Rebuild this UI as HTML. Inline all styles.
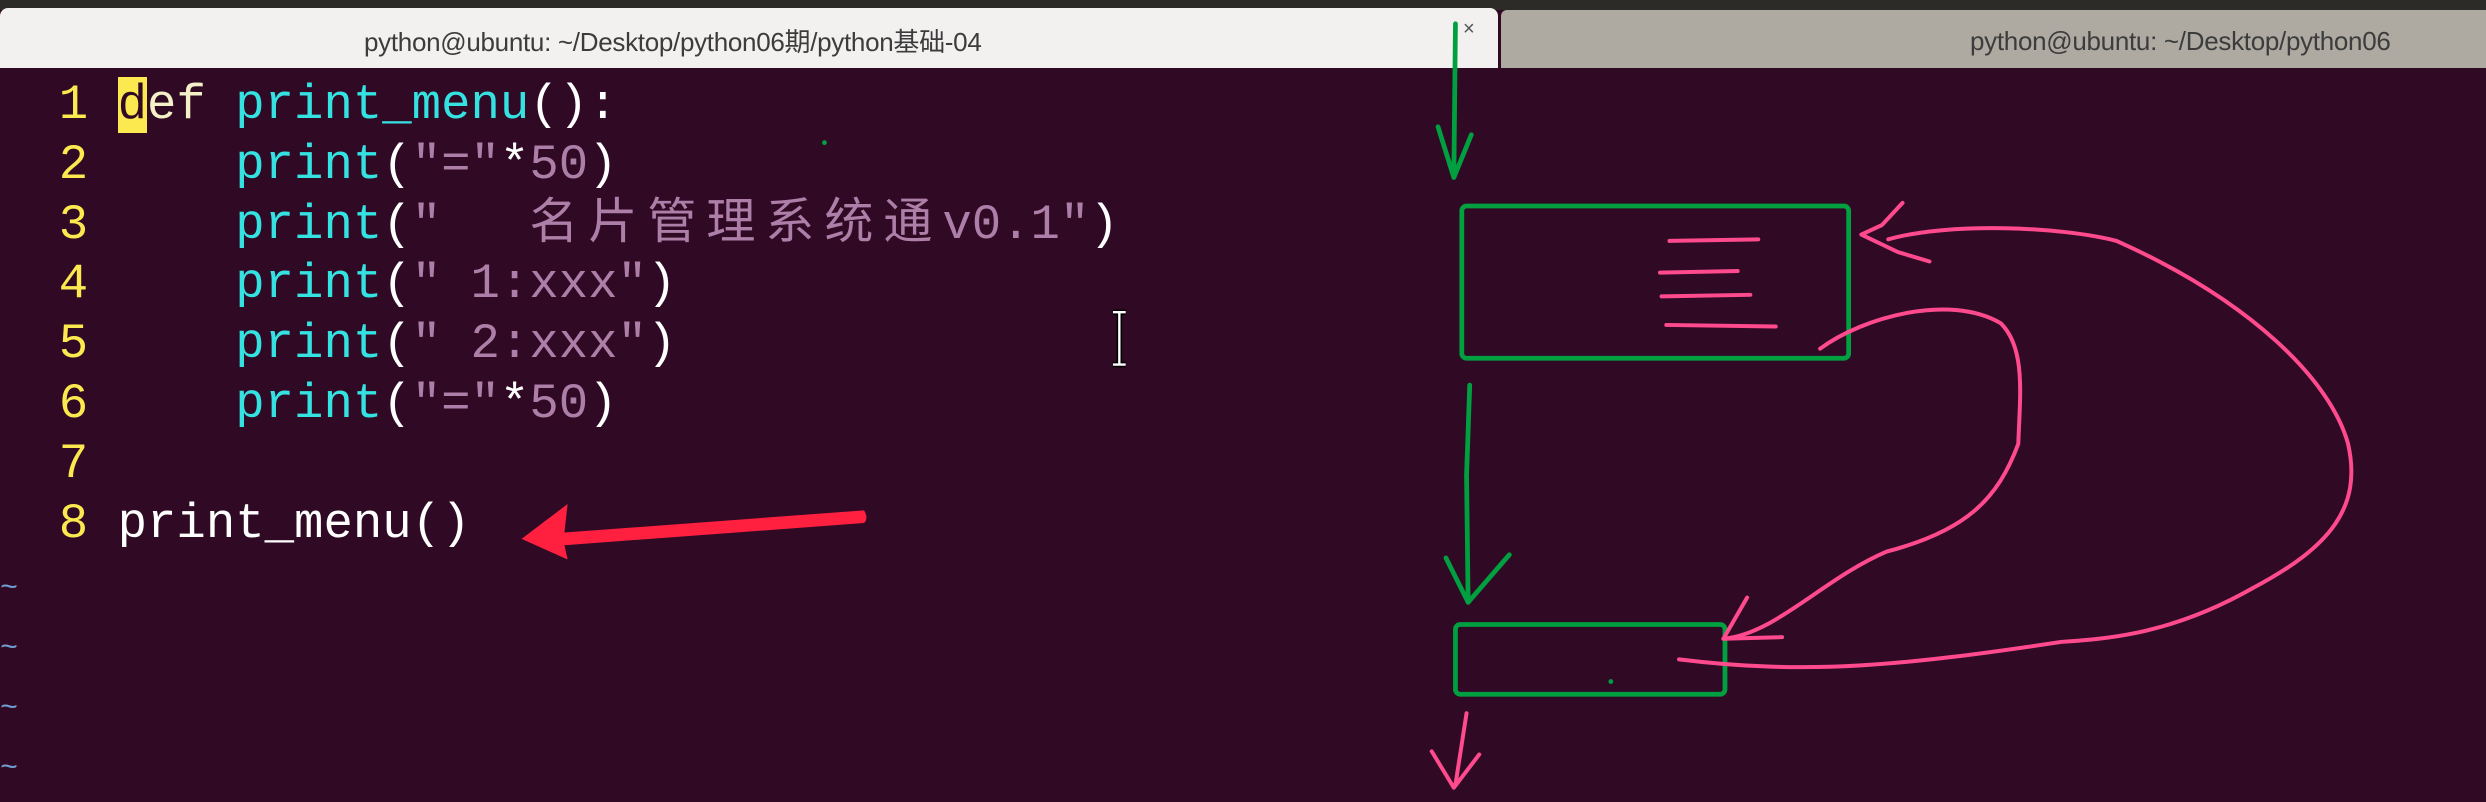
<!DOCTYPE html>
<html><head><meta charset="utf-8"><style>
html,body{margin:0;padding:0;width:2486px;height:802px;overflow:hidden;background:#300a24;}
.top{position:absolute;left:0;top:0;width:2486px;height:10px;background:#2c2b28;}
.tab1{position:absolute;left:0;top:8px;width:1498px;height:60px;background:#f2f1f0;border-radius:8px 8px 0 0;}
.tab2{position:absolute;left:1501px;top:10px;width:985px;height:58px;background:#aeaaa2;border-radius:6px 0 0 0;}
.t{position:absolute;font-family:"Liberation Sans","Noto Sans CJK SC",sans-serif;font-size:26px;color:#3c3c3c;white-space:nowrap;letter-spacing:-0.3px;}
.code{position:absolute;left:0;top:76px;margin:0;font-family:"Liberation Mono","Noto Sans CJK SC",monospace;font-size:49px;line-height:59.8px;color:#fff;white-space:pre;}
.n{color:#fce94f}.f{color:#34e2e2}.s{color:#ad7fa8}.k{color:#f4f0c8}
.cj{font-family:"Noto Sans CJK SC",sans-serif;font-size:49px;letter-spacing:10px;line-height:0;}
.cur{background:#fce94f;color:#300a24}
.tl{color:#729fcf;font-size:30px;line-height:0}
svg{position:absolute;left:0;top:0}
</style></head><body>
<div class="top"></div>
<div class="tab1"></div>
<div class="tab2"></div>
<div class="t" style="left:364px;top:22px">python@ubuntu: ~/Desktop/python06期/python基础-04</div>
<div class="t" style="left:1463px;top:18px;font-size:20px;color:#555">×</div>
<div class="t" style="left:1970px;top:26px">python@ubuntu: ~/Desktop/python06</div>
<pre class="code"><span class="n">  1 </span><span class="cur">d</span><span class="k">ef</span> <span class="f">print_menu</span>():
<span class="n">  2 </span>    <span class="f">print</span>(<span class="s">"="</span>*<span class="s">50</span>)
<span class="n">  3 </span>    <span class="f">print</span>(<span class="s">"   <span class="cj">名片管理系统通</span>v0.1"</span>)
<span class="n">  4 </span>    <span class="f">print</span>(<span class="s">" 1:xxx"</span>)
<span class="n">  5 </span>    <span class="f">print</span>(<span class="s">" 2:xxx"</span>)
<span class="n">  6 </span>    <span class="f">print</span>(<span class="s">"="</span>*<span class="s">50</span>)
<span class="n">  7 </span>
<span class="n">  8 </span>print_menu()
<span class="tl">~</span>
<span class="tl">~</span>
<span class="tl">~</span>
<span class="tl">~</span></pre>
<svg width="2486" height="802" viewBox="0 0 1568 506" preserveAspectRatio="none">
<g fill="none" stroke-linecap="round" stroke-linejoin="round">
<g stroke="#00a040" stroke-width="3">
<path d="M918 15 L917 110"/>
<path d="M907 80 L917 112 L928 85"/>
<rect x="922" y="130" width="244" height="96" rx="3"/>
<path d="M927 243 L925 300 L926 380"/>
<path d="M912 352 L926 380 L952 350"/>
<rect x="918" y="394" width="170" height="44" rx="3"/>
</g>
<g stroke="#ff4a8d" stroke-width="2.5">
<path d="M1053 152 L1109 151 M1047 172 L1096 171 M1048 187 L1104 186 M1051 205 L1120 206"/>
<path d="M1200 128 L1187 142 L1174 148 L1197 159 L1217 165"/>
<path d="M1191 151 C1230 140 1300 143 1335 152 C1420 190 1470 240 1481 280 C1490 320 1470 345 1421 371 C1370 400 1330 403 1300 405 C1200 420 1140 426 1059 416"/>
<path d="M1148 220 C1175 200 1230 185 1262 204 C1278 220 1274 250 1273 280 C1260 315 1240 335 1190 348 C1150 365 1120 400 1087 403"/>
<path d="M1102 377 L1087 403 L1124 402"/>
<path d="M925 450 L918 495"/>
<path d="M903 474 L917 497 L933 476"/>
</g>
</g>
<circle cx="520" cy="90" r="1.5" fill="#00a040"/>
<circle cx="1016" cy="430" r="1.5" fill="#00a040"/>
<path d="M545 322 Q548 327 545 330 L356 344 L358 353 L329 340 L358 318 L356 336 Z" fill="#ff2040"/>
<g stroke="#000" stroke-width="3.5"><path d="M706 197 V230 M702 197 H710 M702 230 H710"/></g>
<g stroke="#fff" stroke-width="1.5"><path d="M706 197 V230 M702 197 H710 M702 230 H710"/></g>
</svg>
</body></html>
